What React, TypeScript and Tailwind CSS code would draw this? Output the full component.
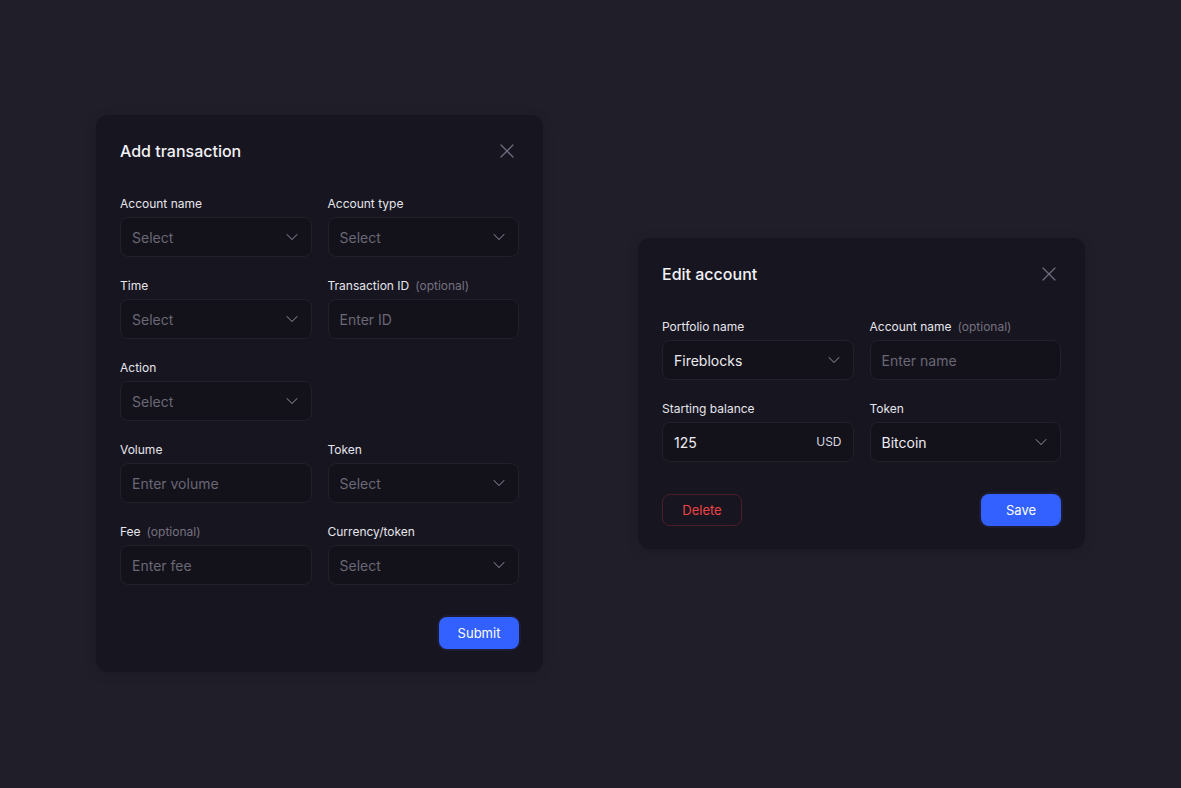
import { ChevronDown, X } from "lucide-react";
import type { ReactNode } from "react";

function Label({ text, optional }: { text: string; optional?: boolean }) {
  return (
    <div className="flex h-4 items-end text-[12px] leading-[14px] text-[#e6e5ec]">
      <span>{text}</span>
      {optional && <span className="ml-1.5 text-[12px] text-[#75727f]">(optional)</span>}
    </div>
  );
}

function Field({ label, optional, children }: { label: string; optional?: boolean; children: ReactNode }) {
  return (
    <div className="flex flex-col gap-1.5">
      <Label text={label} optional={optional} />
      {children}
    </div>
  );
}

function SelectBox({ value }: { value?: string }) {
  return (
    <div className="flex h-10 items-center justify-between rounded-lg border border-[#22202b] bg-[#13121a] pl-[11px] pr-[9px]">
      <span className={value ? "text-[14px] text-[#ecebf1]" : "text-[14px] text-[#6a6776]"}>{value ?? "Select"}</span>
      <ChevronDown className="h-5 w-5 text-[#7d7a8c]" strokeWidth={1.25} />
    </div>
  );
}

function TextBox({ placeholder, value, suffix }: { placeholder?: string; value?: string; suffix?: string }) {
  return (
    <div className="flex h-10 items-center justify-between rounded-lg border border-[#22202b] bg-[#13121a] pl-[11px] pr-[11px]">
      <span className={value ? "text-[14px] text-[#ecebf1]" : "text-[14px] text-[#6a6776]"}>{value ?? placeholder}</span>
      {suffix && <span className="text-[12px] text-[#d9d8e0]">{suffix}</span>}
    </div>
  );
}

function Modal({ title, children }: { title: string; children: ReactNode }) {
  return (
    <div className="w-[447px] rounded-xl bg-[#17151f] px-6 pb-[23px] pt-6 shadow-[0_2px_12px_rgba(0,0,0,0.15)]">
      <div className="flex h-6 items-center justify-between">
        <h2 className="text-[16px] font-medium text-[#f2f1f6]">{title}</h2>
        <X className="h-6 w-6 text-[#6f6c80]" strokeWidth={1.25} />
      </div>
      {children}
    </div>
  );
}

export default function App() {
  return (
    <div
      className="flex min-h-screen w-full items-start bg-[#201f29] pl-[96px] pt-[115px]"
      style={{ fontFamily: "Inter, 'Noto Sans', sans-serif" }}
    >
      <Modal title="Add transaction">
        <div className="mt-8 grid grid-cols-2 gap-x-4 gap-y-5">
          <Field label="Account name">
            <SelectBox />
          </Field>
          <Field label="Account type">
            <SelectBox />
          </Field>
          <Field label="Time">
            <SelectBox />
          </Field>
          <Field label="Transaction ID" optional>
            <TextBox placeholder="Enter ID" />
          </Field>
          <Field label="Action">
            <SelectBox />
          </Field>
          <div />
          <Field label="Volume">
            <TextBox placeholder="Enter volume" />
          </Field>
          <Field label="Token">
            <SelectBox />
          </Field>
          <Field label="Fee" optional>
            <TextBox placeholder="Enter fee" />
          </Field>
          <Field label="Currency/token">
            <SelectBox />
          </Field>
        </div>
        <div className="mt-8 flex justify-end">
          <button className="h-8 w-20 rounded-lg bg-[#3361ff] pt-px text-[13px] text-white ring-2 ring-[#1d1c33]">
            Submit
          </button>
        </div>
      </Modal>

      <div className="ml-[95px] mt-[123px]">
        <Modal title="Edit account">
          <div className="mt-8 grid grid-cols-2 gap-x-4 gap-y-5">
            <Field label="Portfolio name">
              <SelectBox value="Fireblocks" />
            </Field>
            <Field label="Account name" optional>
              <TextBox placeholder="Enter name" />
            </Field>
            <Field label="Starting balance">
              <TextBox value="125" suffix="USD" />
            </Field>
            <Field label="Token">
              <SelectBox value="Bitcoin" />
            </Field>
          </div>
          <div className="mt-8 flex justify-between">
            <button className="h-8 w-20 rounded-lg border border-[#4a1e27] pt-px text-[13px] text-[#ef4347]">
              Delete
            </button>
            <button className="h-8 w-20 rounded-lg bg-[#3361ff] pt-px text-[13px] text-white ring-2 ring-[#1d1c33]">
              Save
            </button>
          </div>
        </Modal>
      </div>
    </div>
  );
}
